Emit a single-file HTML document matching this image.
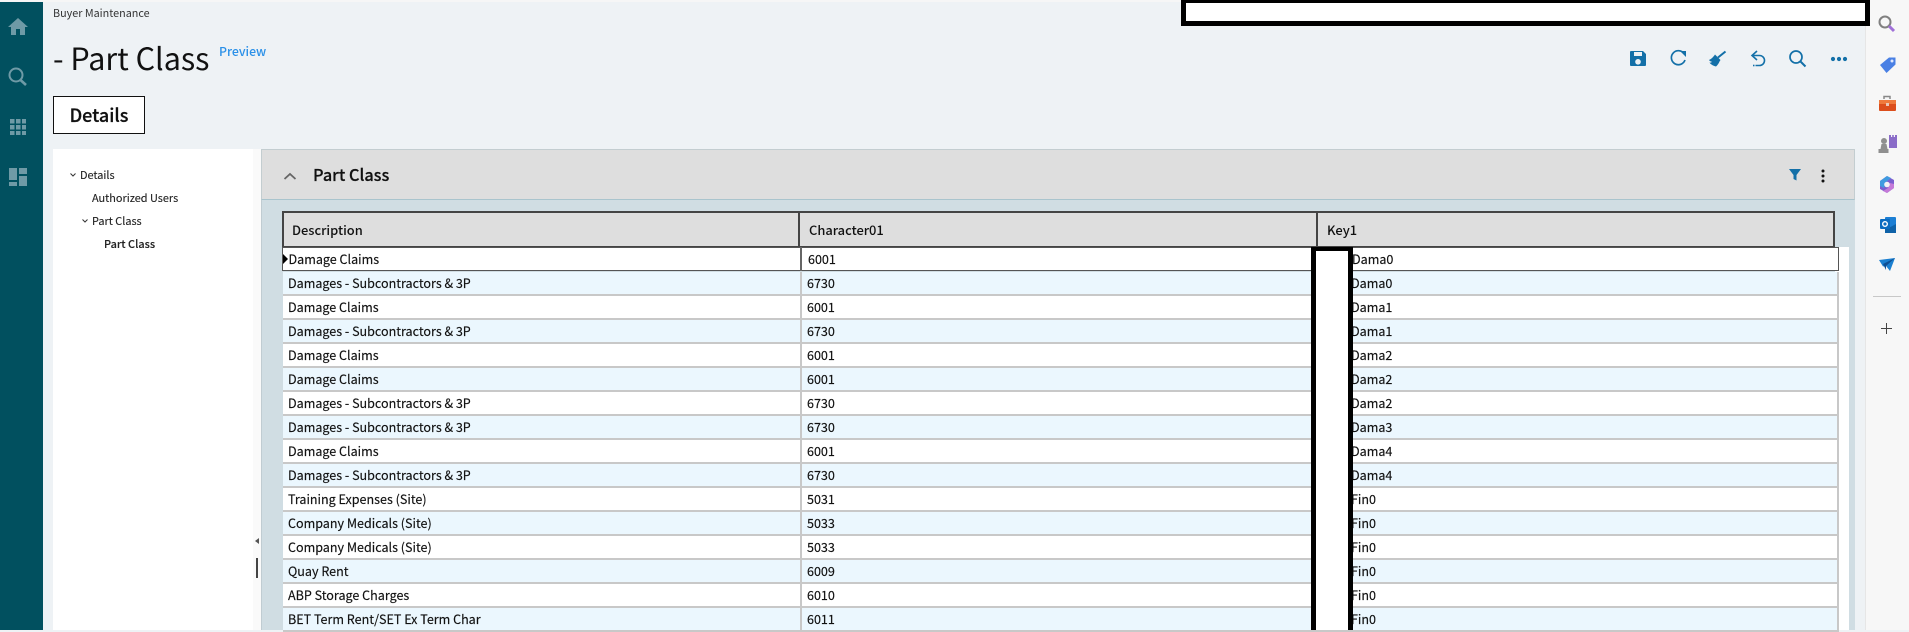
<!DOCTYPE html>
<html lang="en">
<head>
<meta charset="utf-8">
<title>Part Class</title>
<style>
*{box-sizing:border-box}
html,body{margin:0;padding:0;width:1909px;height:630px;overflow:hidden;background:#eef2f5;
font-family:"Noto Sans CJK JP","Liberation Sans",sans-serif;color:#111}
.a{position:absolute}
.t{position:absolute;white-space:nowrap;line-height:20px}
svg{position:absolute;overflow:visible}
.row{position:absolute;left:283px;width:1556px;height:24px;border-bottom:2px solid #c8c8c8;border-right:2px solid #c8c8c8;font-size:12.55px;line-height:22px;color:#111;-webkit-text-stroke:.15px #111}
.row.o{background:#fff}.row.e{background:#ebf7fe}
.row span{position:absolute;top:0;white-space:nowrap}
.row i{position:absolute;left:517px;top:0;width:2px;height:24px;background:#c8c8c8}
.row span:nth-of-type(1){left:5px}.row span:nth-of-type(2){left:524px}.row span:nth-of-type(3){left:1068px}
.hc{position:absolute;top:211px;height:37px;background:#dedede;border:2px solid #444;font-size:12.9px;font-weight:500;line-height:33px;padding-left:8px}
.hc.b{padding-left:9px}
.tr{font-size:10.9px;color:#222;-webkit-text-stroke:.12px #222}
</style>
</head>
<body>
<div class="a" style="left:0;top:0;width:1909px;height:2px;background:#f6f6f6"></div>
<div class="a" style="left:0;top:2px;width:43px;height:628px;background:#01505f"></div>
<div class="a" style="left:1865px;top:0;width:44px;height:630px;background:#f7f7f7;border-left:1px solid #e6e6e6"></div>

<!-- left rail icons -->
<svg style="left:0;top:0" width="43" height="200" fill="#6f9aa6">
<path d="M18 18 L28 27 L25 27 L25 35 L20 35 L20 29 L16 29 L16 35 L11 35 L11 27 L8 27Z"/>
<circle cx="16" cy="75" r="6.5" fill="none" stroke="#6f9aa6" stroke-width="2"/>
<path d="M20.5 80 L26 85" stroke="#6f9aa6" stroke-width="2.6" fill="none"/>
<path d="M10 119h4.500v4.500h-4.500zM16 119h4.500v4.500h-4.500zM22 119h4v4.500h-4zM10 125h4.500v4.500h-4.500zM16 125h4.500v4.500h-4.500zM22 125h4v4.500h-4zM10 131h4.500v4h-4.500zM16 131h4.500v4h-4.500zM22 131h4v4h-4z"/>
<path d="M9 168h8v12h-8zM19 168h8v6h-8zM9 182h8v4h-8zM19 176h8v10h-8z"/>
</svg>

<div class="t" style="left:53px;top:3px;font-size:10.8px;line-height:20px;color:#333">Buyer Maintenance</div>
<div class="t" style="left:53px;top:35px;font-size:30.5px;line-height:44px;color:#111">- Part Class</div>
<div class="t" style="left:219px;top:41px;font-size:12.3px;font-weight:500;color:#2a90e8">Preview</div>

<div class="a" style="left:53px;top:96px;width:92px;height:38px;background:#fff;border:1px solid #111;text-align:center;font-size:18px;font-weight:500;line-height:37px;color:#111;-webkit-text-stroke:.25px #111">Details</div>

<!-- redaction top -->
<div class="a" style="left:1181px;top:0;width:689px;height:26px;background:#fff;border:5px solid #000;border-top-width:3px"></div>

<!-- toolbar -->
<svg style="left:0;top:0" width="1909" height="100" fill="#1370a8">
<path fill-rule="evenodd" d="M1631 51h12l3 3v11a1 1 0 0 1-1 1h-14a1 1 0 0 1-1-1v-13a1 1 0 0 1 1-1zM1634 52v4h8v-4zM1638 59a2.800 2.800 0 1 0 .01 0z"/>
<path d="M1684 53.500A7 7 0 1 0 1685 60" fill="none" stroke="#1370a8" stroke-width="1.700"/>
<path d="M1680 51h6v6z"/>
<path d="M1725.500 51.500l-7.500 6" stroke="#1370a8" stroke-width="2" fill="none"/>
<path d="M1715 54.500l5.500 5.500-1 1.500c-.8 2-2 3.800-3.500 5-2.500-.5-5.500-2.200-6.500-4 1 .2 2 0 2.500-.8-1 0-2.300-.5-3-1.700 1.800-.8 4-2.500 6-5.500z"/>
<path d="M1757 51l-5 4.500 5 4.500M1752.500 55.500h7a5 5 0 0 1 0 10h-4" fill="none" stroke="#1370a8" stroke-width="1.600"/>
<path d="M1753 65.500h1.500" stroke="#1370a8" stroke-width="1.600"/>
<circle cx="1796" cy="57" r="6" fill="none" stroke="#1370a8" stroke-width="1.700"/>
<path d="M1800.500 61.500l5 5" stroke="#1370a8" stroke-width="2" fill="none"/>
<circle cx="1833" cy="59" r="2.100"/><circle cx="1839" cy="59" r="2.100"/><circle cx="1845" cy="59" r="2.100"/>
</svg>

<!-- tree panel -->
<div class="a" style="left:53px;top:149px;width:200px;height:481px;background:#fff"></div>
<div class="a" style="left:253px;top:149px;width:8px;height:481px;background:#fafafa"></div>
<svg style="left:0;top:0" width="300" height="630">
<path d="M70.500 173.500l2.500 2.500 2.500-2.500M82.500 219.500l2.500 2.500 2.500-2.500" fill="none" stroke="#333" stroke-width="1"/>
<path d="M259 538v6l-4-3z" fill="#555"/>
<rect x="256" y="558" width="2" height="20" fill="#444"/>
</svg>
<div class="t tr" style="left:80px;top:165px">Details</div>
<div class="t tr" style="left:92px;top:188px">Authorized Users</div>
<div class="t tr" style="left:92px;top:211px">Part Class</div>
<div class="t tr" style="left:104px;top:234px;font-weight:500">Part Class</div>

<!-- content panel -->
<div class="a" style="left:261px;top:149px;width:1594px;height:481px;background:#d0dde3;border-left:1px solid #c0ccd2"></div>
<div class="a" style="left:261px;top:149px;width:1594px;height:51px;background:#dedede;border:1px solid #c3cdd0;border-bottom:1px solid #a9c4cd"></div>
<svg style="left:0;top:0" width="1909" height="210">
<path d="M284.500 179l5.500-5 5.500 5" fill="none" stroke="#666" stroke-width="1.800"/>
<path d="M1789 169h12l-4.500 6v5.500l-3-1.500v-4z" fill="#1370a8"/>
<circle cx="1823" cy="171" r="1.500" fill="#111"/><circle cx="1823" cy="176" r="1.500" fill="#111"/><circle cx="1823" cy="181" r="1.500" fill="#111"/>
</svg>
<div class="t" style="left:313px;top:163px;font-size:16.3px;font-weight:500;line-height:22px;color:#111;-webkit-text-stroke:.2px #111">Part Class</div>

<!-- grid headers -->
<div class="hc" style="left:282px;width:518px">Description</div>
<div class="hc b" style="left:798px;width:520px">Character01</div>
<div class="hc b" style="left:1316px;width:519px">Key1</div>

<!-- scroll strip -->
<div class="a" style="left:1835px;top:247px;width:14px;height:383px;background:#fff"></div>

<!-- rows -->
<div class="row o" style="top:247px;height:24px;left:282px;width:1557px;border:1px solid #555;line-height:22px"><span style="left:5.500px">Damage Claims</span><span style="left:525px">6001</span><span style="left:1069px">Dama0</span><i style="left:517px;top:-1px;height:24px;background:#666"></i></div>
<div class="row e" style="top:272px"><span>Damages - Subcontractors &amp; 3P</span><span>6730</span><span>Dama0</span><i></i></div>
<div class="row o" style="top:296px"><span>Damage Claims</span><span>6001</span><span>Dama1</span><i></i></div>
<div class="row e" style="top:320px"><span>Damages - Subcontractors &amp; 3P</span><span>6730</span><span>Dama1</span><i></i></div>
<div class="row o" style="top:344px"><span>Damage Claims</span><span>6001</span><span>Dama2</span><i></i></div>
<div class="row e" style="top:368px"><span>Damage Claims</span><span>6001</span><span>Dama2</span><i></i></div>
<div class="row o" style="top:392px"><span>Damages - Subcontractors &amp; 3P</span><span>6730</span><span>Dama2</span><i></i></div>
<div class="row e" style="top:416px"><span>Damages - Subcontractors &amp; 3P</span><span>6730</span><span>Dama3</span><i></i></div>
<div class="row o" style="top:440px"><span>Damage Claims</span><span>6001</span><span>Dama4</span><i></i></div>
<div class="row e" style="top:464px"><span>Damages - Subcontractors &amp; 3P</span><span>6730</span><span>Dama4</span><i></i></div>
<div class="row o" style="top:488px"><span>Training Expenses (Site)</span><span>5031</span><span>Fin0</span><i></i></div>
<div class="row e" style="top:512px"><span>Company Medicals (Site)</span><span>5033</span><span>Fin0</span><i></i></div>
<div class="row o" style="top:536px"><span>Company Medicals (Site)</span><span>5033</span><span>Fin0</span><i></i></div>
<div class="row e" style="top:560px"><span>Quay Rent</span><span>6009</span><span>Fin0</span><i></i></div>
<div class="row o" style="top:584px"><span>ABP Storage Charges</span><span>6010</span><span>Fin0</span><i></i></div>
<div class="row e" style="top:608px"><span>BET Term Rent/SET Ex Term Char</span><span>6011</span><span>Fin0</span><i></i></div>

<svg style="left:0;top:0" width="300" height="300"><path d="M283 254v10l5-5z" fill="#000"/></svg>

<!-- vertical redaction -->
<div class="a" style="left:1311px;top:247px;width:42px;height:383px;background:#fff;border:5px solid #000;border-bottom:0;border-top-width:4px"></div>

<!-- right rail icons -->
<svg style="left:0;top:0" width="1909" height="340">
<circle cx="1885" cy="22" r="5.500" fill="none" stroke="#808080" stroke-width="2"/>
<path d="M1889 26l5 5" stroke="#a070d8" stroke-width="3"/>
<path d="M1880 65l9-7.500h6.500v7l-9 8.500z" fill="#4a80e4"/>
<circle cx="1892" cy="61" r="1.500" fill="#dfe8ff"/>
<path d="M1884 99v-2.500h6v2.500" fill="none" stroke="#888" stroke-width="1.500"/>
<rect x="1879" y="100" width="17" height="11" rx="1" fill="#dc4e1c"/>
<rect x="1879" y="100" width="17" height="4" fill="#ef7a3c"/>
<rect x="1886" y="103" width="3" height="3" fill="#e8c8b8"/>
<path d="M1889 135v13h8v-13h-2v2h-1.200v-2h-1.600v2h-1.200v-2z" fill="#8a6cc8"/>
<circle cx="1884" cy="141" r="3" fill="#8f8f8f"/>
<path d="M1881.500 144h5l1 5h1v4h-10v-4h2z" fill="#8f8f8f"/>
<path d="M1880 181l7-5 7 4v8l-7 5-7-4z" fill="#7b5fd0"/>
<path d="M1880 181l7-5 4 2-5 4-2 6-4-2z" fill="#3f9be0"/>
<path d="M1894 188l-7 5-4-2 5-3 2-5 4 1z" fill="#c47ad8"/>
<circle cx="1887" cy="184.500" r="2.800" fill="#f2f2f4"/>
<rect x="1885" y="217" width="11" height="14" rx="1" fill="#1c7fd4"/>
<path d="M1885 224l5.500 3 5.500-3v9h-11z" fill="#0f62a8"/>
<rect x="1880" y="219" width="10" height="10" rx="1" fill="#0c6cc0"/>
<circle cx="1885" cy="224" r="2.300" fill="none" stroke="#fff" stroke-width="1.400"/>
<path d="M1879 260l16-2-5 13-4-5-3 .5z" fill="#1a7fd0"/>
<path d="M1895 258l-9 8 0 4-3-6z" fill="#0e4f94"/>
<rect x="1873" y="296" width="28" height="1" fill="#c8c8c8"/>
<path d="M1886.500 323v11M1881 328.500h11" stroke="#444" stroke-width="1"/>
</svg>
</body>
</html>
